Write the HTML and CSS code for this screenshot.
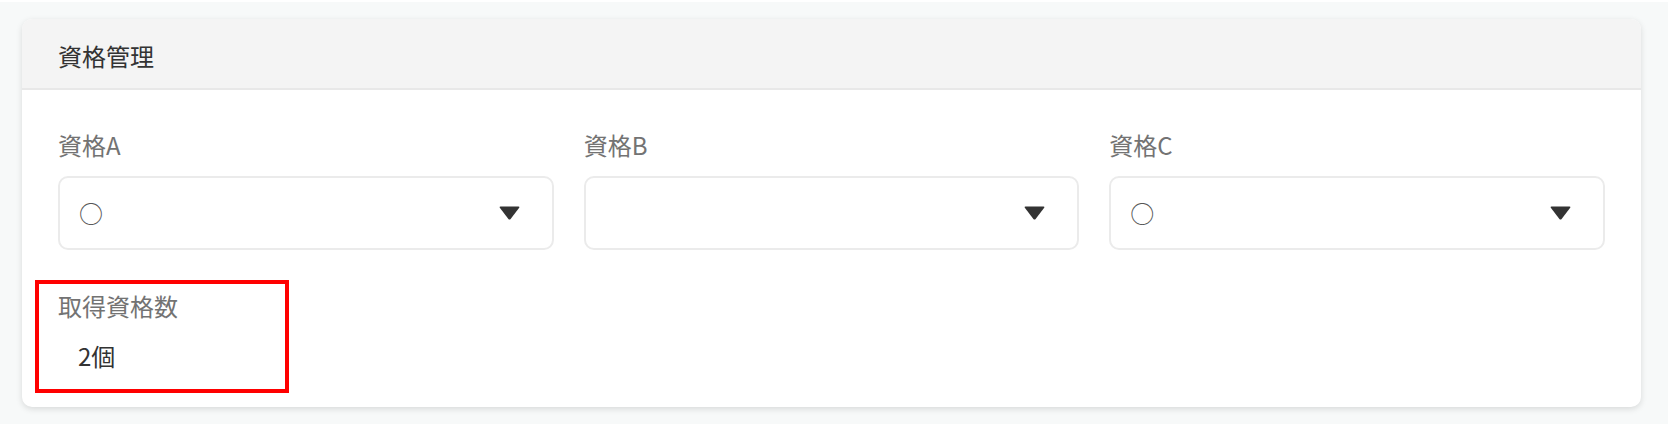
FILE: index.html
```html
<!DOCTYPE html>
<html lang="ja">
<head>
<meta charset="utf-8">
<title>資格管理</title>
<link rel="stylesheet" href="styles.css">
</head>
<body>
<div class="page">
  <section class="card">
    <header class="card-header">資格管理</header>
    <div class="card-body">
      <div class="select-grid">
        <div class="field">
          <div class="label">資格A</div>
          <div class="select">
            <span class="select-value">○</span>
            <svg class="caret" width="21" height="14" viewBox="0 0 21 14"><path d="M1.5 0.5 H19.5 Q21 0.5 20 2 L11.6 13 Q10.5 14.2 9.4 13 L1 2 Q0 0.5 1.5 0.5 Z" fill="#333"/></svg>
          </div>
        </div>
        <div class="field">
          <div class="label">資格B</div>
          <div class="select">
            <span class="select-value"></span>
            <svg class="caret" width="21" height="14" viewBox="0 0 21 14"><path d="M1.5 0.5 H19.5 Q21 0.5 20 2 L11.6 13 Q10.5 14.2 9.4 13 L1 2 Q0 0.5 1.5 0.5 Z" fill="#333"/></svg>
          </div>
        </div>
        <div class="field">
          <div class="label">資格C</div>
          <div class="select">
            <span class="select-value">○</span>
            <svg class="caret" width="21" height="14" viewBox="0 0 21 14"><path d="M1.5 0.5 H19.5 Q21 0.5 20 2 L11.6 13 Q10.5 14.2 9.4 13 L1 2 Q0 0.5 1.5 0.5 Z" fill="#333"/></svg>
          </div>
        </div>
      </div>
      <div class="count-field">
        <div class="label">取得資格数</div>
        <div class="count-value">2個</div>
      </div>
    </div>
  </section>
</div>
</body>
</html>
```

FILE: styles.css
```css
html, body {
  margin: 0;
  padding: 0;
  background: #f7f9f9;
}

body {
  font-family: "Noto Sans CJK JP", "Noto Sans", sans-serif;
  color: #333;
  width: 1668px;
  height: 424px;
  overflow: hidden;
}

.page {
  border-top: 2px solid #ffffff;
  padding: 17px 27px 0 22px;
}

.card {
  background: #fff;
  border-radius: 10px;
  box-shadow: 0 2px 6px rgba(0, 0, 0, 0.13);
  overflow: hidden;
}

.card-header {
  background: #f4f4f4;
  border-bottom: 2px solid #e8e8e8;
  font-size: 24px;
  line-height: 36px;
  padding: 19px 36px 14px 36px;
  color: #333;
}

.card-body {
  padding: 37px 36px 14px 36px;
}

.select-grid {
  display: grid;
  grid-template-columns: repeat(3, 1fr);
  column-gap: 30px;
}

.label {
  font-size: 24px;
  line-height: 36px;
  color: #737373;
}

.select {
  margin-top: 13px;
  height: 74px;
  box-sizing: border-box;
  border: 2px solid #ebebeb;
  border-radius: 10px;
  display: flex;
  align-items: center;
  justify-content: space-between;
  padding: 0 32px 0 19px;
}

.select-value {
  font-family: "Noto Sans CJK JP", sans-serif;
  font-size: 24px;
  line-height: 36px;
  color: #555;
}

.caret {
  display: block;
  flex: none;
}

.count-field {
  margin-top: 30px;
  margin-left: -23px;
  width: 254px;
  box-sizing: border-box;
  border: 4px solid #ff0000;
  padding: 4px 20px 15px 19px;
}

.count-value {
  margin-top: 14px;
  padding-left: 20px;
  font-size: 24px;
  line-height: 36px;
  color: #333;
}
```
